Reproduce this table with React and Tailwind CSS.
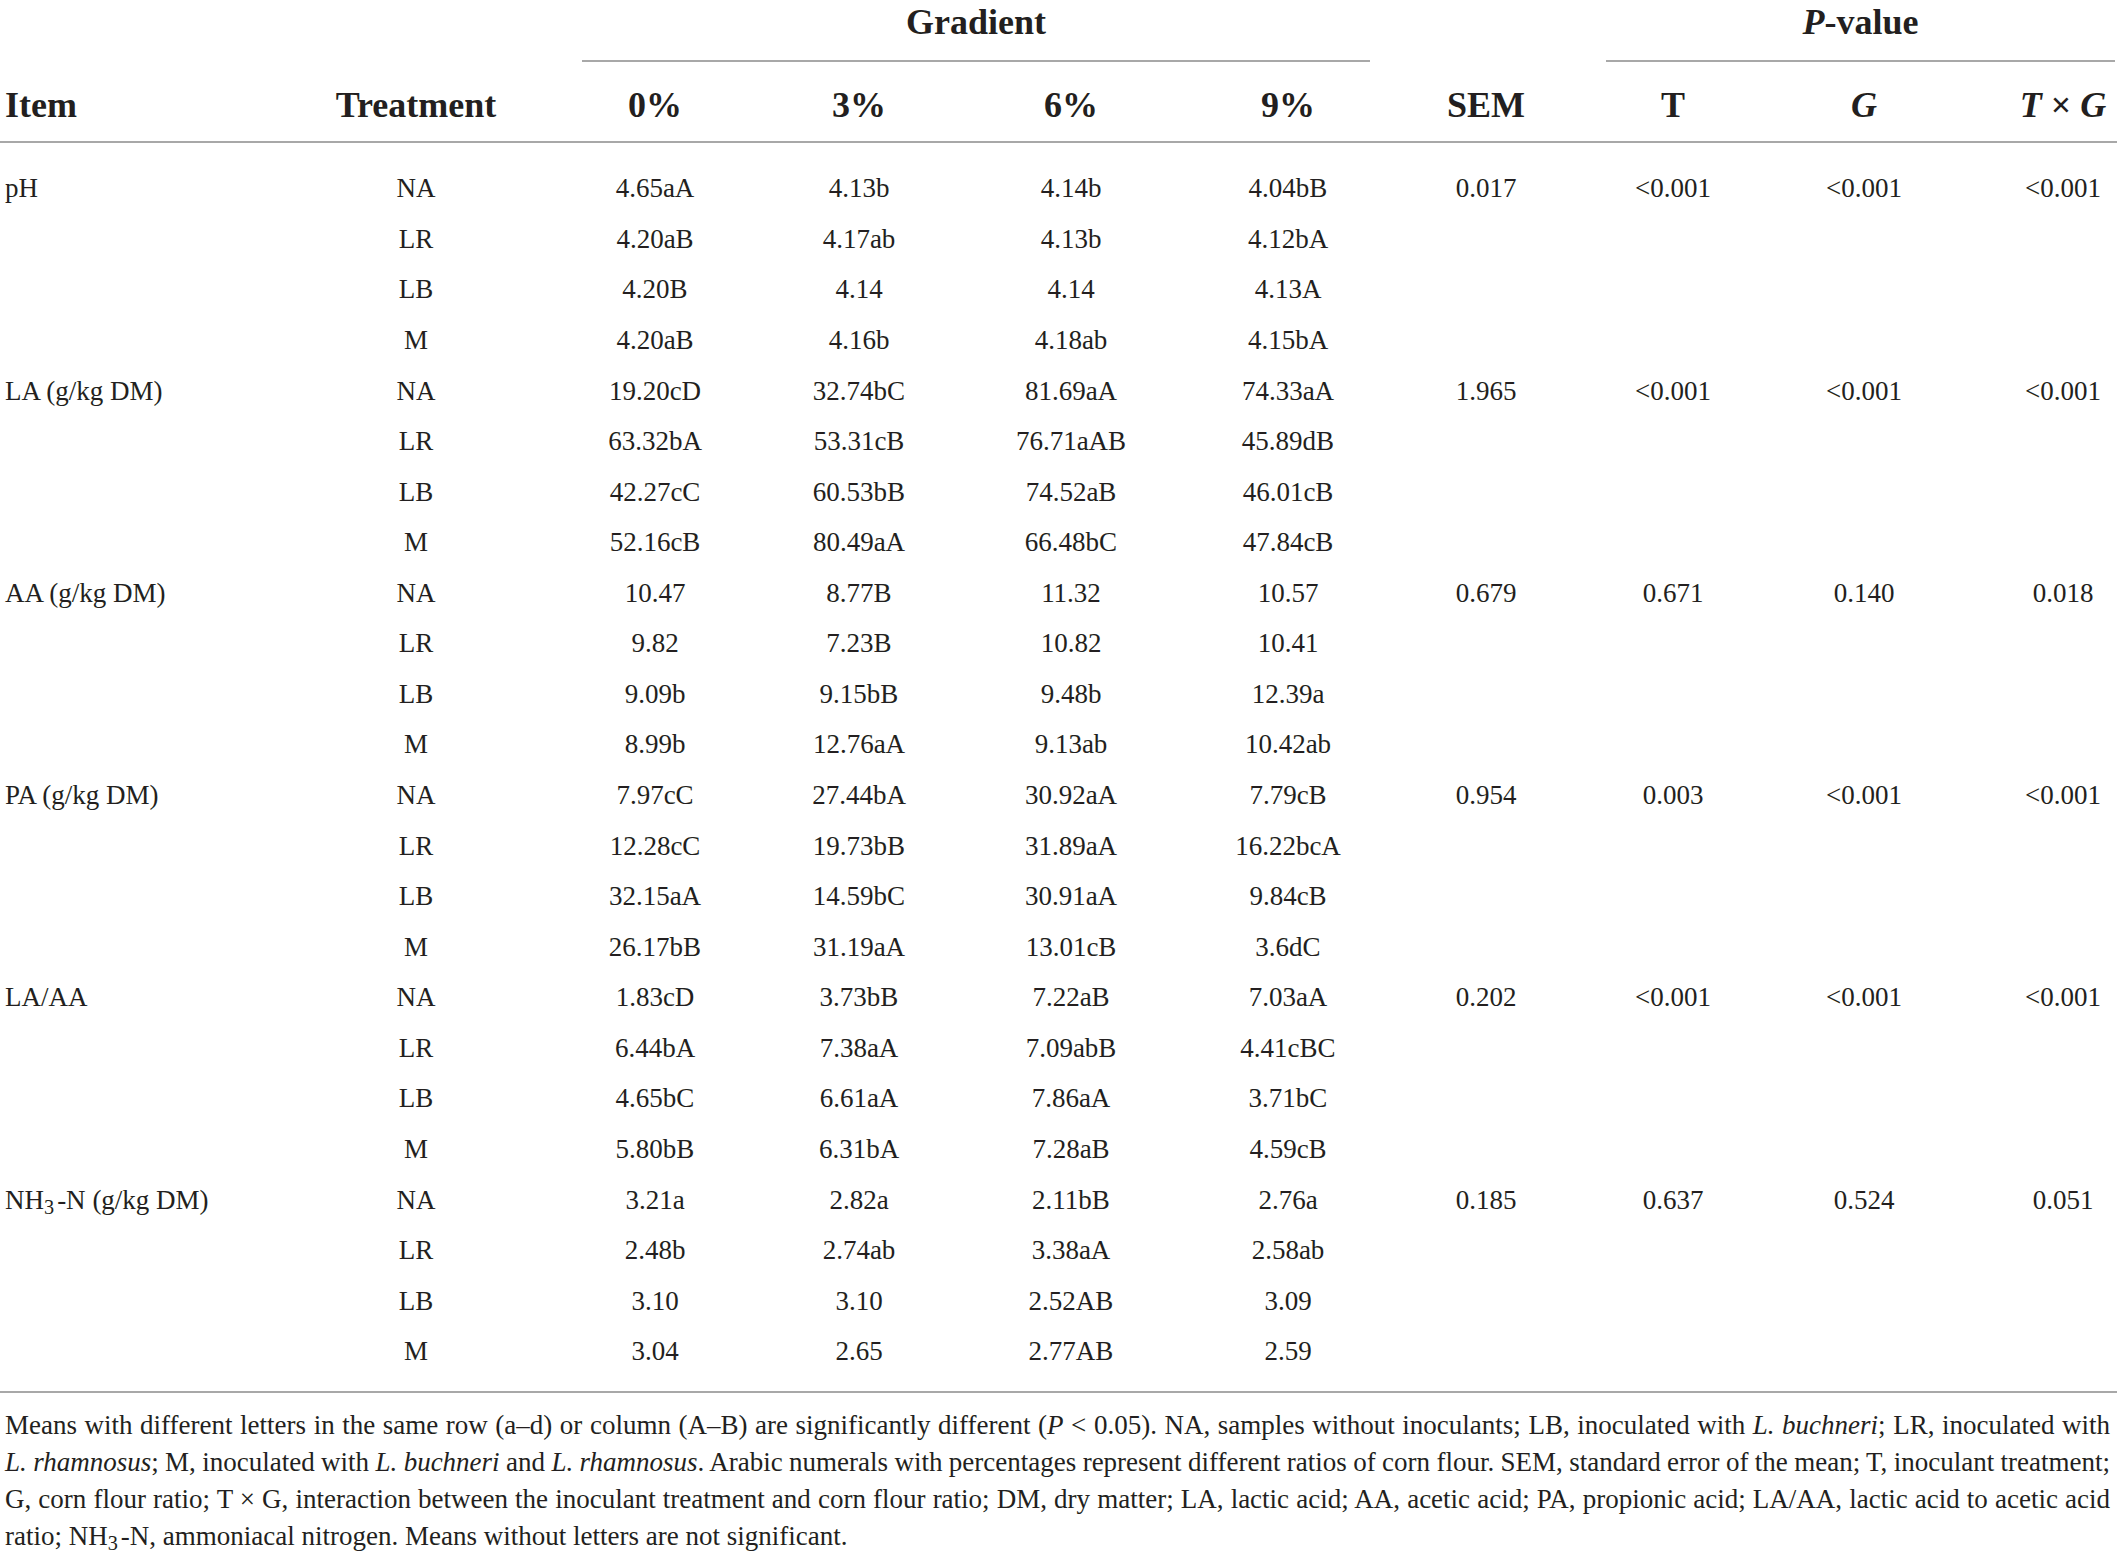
import React from "react";

const cols = "grid grid-cols-[300px_232px_246px_162px_262px_172px_224px_150px_232px_137px]";

const N3 = () => (
  <>
    NH<sub className="mr-[3px]">3</sub>-N
  </>
);

const groups = [
  {
    item: "pH",
    stats: ["0.017", "<0.001", "<0.001", "<0.001"],
    rows: [
      ["NA", "4.65aA", "4.13b", "4.14b", "4.04bB"],
      ["LR", "4.20aB", "4.17ab", "4.13b", "4.12bA"],
      ["LB", "4.20B", "4.14", "4.14", "4.13A"],
      ["M", "4.20aB", "4.16b", "4.18ab", "4.15bA"],
    ],
  },
  {
    item: "LA (g/kg DM)",
    stats: ["1.965", "<0.001", "<0.001", "<0.001"],
    rows: [
      ["NA", "19.20cD", "32.74bC", "81.69aA", "74.33aA"],
      ["LR", "63.32bA", "53.31cB", "76.71aAB", "45.89dB"],
      ["LB", "42.27cC", "60.53bB", "74.52aB", "46.01cB"],
      ["M", "52.16cB", "80.49aA", "66.48bC", "47.84cB"],
    ],
  },
  {
    item: "AA (g/kg DM)",
    stats: ["0.679", "0.671", "0.140", "0.018"],
    rows: [
      ["NA", "10.47", "8.77B", "11.32", "10.57"],
      ["LR", "9.82", "7.23B", "10.82", "10.41"],
      ["LB", "9.09b", "9.15bB", "9.48b", "12.39a"],
      ["M", "8.99b", "12.76aA", "9.13ab", "10.42ab"],
    ],
  },
  {
    item: "PA (g/kg DM)",
    stats: ["0.954", "0.003", "<0.001", "<0.001"],
    rows: [
      ["NA", "7.97cC", "27.44bA", "30.92aA", "7.79cB"],
      ["LR", "12.28cC", "19.73bB", "31.89aA", "16.22bcA"],
      ["LB", "32.15aA", "14.59bC", "30.91aA", "9.84cB"],
      ["M", "26.17bB", "31.19aA", "13.01cB", "3.6dC"],
    ],
  },
  {
    item: "LA/AA",
    stats: ["0.202", "<0.001", "<0.001", "<0.001"],
    rows: [
      ["NA", "1.83cD", "3.73bB", "7.22aB", "7.03aA"],
      ["LR", "6.44bA", "7.38aA", "7.09abB", "4.41cBC"],
      ["LB", "4.65bC", "6.61aA", "7.86aA", "3.71bC"],
      ["M", "5.80bB", "6.31bA", "7.28aB", "4.59cB"],
    ],
  },
  {
    item: "NH3",
    stats: ["0.185", "0.637", "0.524", "0.051"],
    rows: [
      ["NA", "3.21a", "2.82a", "2.11bB", "2.76a"],
      ["LR", "2.48b", "2.74ab", "3.38aA", "2.58ab"],
      ["LB", "3.10", "3.10", "2.52AB", "3.09"],
      ["M", "3.04", "2.65", "2.77AB", "2.59"],
    ],
  },
];

function Row({ item, cells, stats }) {
  return (
    <div className={`${cols} h-[50.57px] items-center`}>
      <div className="pl-[5px] whitespace-nowrap">
        {item === "NH3" ? (
          <>
            <N3 /> (g/kg DM)
          </>
        ) : (
          item
        )}
      </div>
      {cells.map((c, i) => (
        <div key={i} className="text-center whitespace-nowrap">
          {c}
        </div>
      ))}
      <div className="text-center">{stats ? stats[0] : ""}</div>
      <div className="text-center">{stats ? stats[1] : ""}</div>
      <div className="text-center">{stats ? stats[2] : ""}</div>
      <div className="pl-[29px] text-center">{stats ? stats[3] : ""}</div>
    </div>
  );
}

const lineCls = "[text-align:justify] [text-align-last:justify] [word-spacing:-3px]";

export default function App() {
  return (
    <div
      className="min-h-[1557px] w-[2117px] bg-white text-[#231f20] text-[27px] overflow-hidden"
      style={{ fontFamily: '"Liberation Serif", "Times New Roman", serif' }}
    >
      {/* Spanning header */}
      <div className={`${cols} font-bold text-[36px]`}>
        <div className="col-start-3 col-span-4 ml-[50px] mr-[4px] border-b-2 border-[#a8a8a8] pb-[16px] leading-[44px] text-center">
          Gradient
        </div>
        <div className="col-start-8 col-span-3 ml-[8px] mr-[2px] border-b-2 border-[#a8a8a8] pb-[16px] leading-[44px] text-center">
          <i>P</i>-value
        </div>
      </div>

      {/* Column headers */}
      <div className={`${cols} h-[81px] items-center pt-[6px] border-b-2 border-[#a8a8a8] font-bold text-[36px] leading-[44px]`}>
        <div className="pl-[5px]">Item</div>
        <div className="text-center">Treatment</div>
        <div className="text-center">0%</div>
        <div className="text-center">3%</div>
        <div className="text-center">6%</div>
        <div className="text-center">9%</div>
        <div className="text-center">SEM</div>
        <div className="text-center">T</div>
        <div className="text-center">
          <i>G</i>
        </div>
        <div className="pl-[29px] text-center whitespace-nowrap">
          <i>T</i> × <i>G</i>
        </div>
      </div>

      {/* Body */}
      <div className="pt-[20px] pb-[14px] border-b-2 border-[#a8a8a8] leading-[30px]">
        {groups.map((g) =>
          g.rows.map((r, i) => (
            <Row
              key={g.item + r[0]}
              item={i === 0 ? g.item : ""}
              cells={r}
              stats={i === 0 ? g.stats : null}
            />
          ))
        )}
      </div>

      {/* Footnote */}
      <div className="pt-[14px] pl-[5px] pr-[7px] text-[27px] leading-[37px]">
        <div className={lineCls}>
          Means with different letters in the same row (a–d) or column (A–B) are significantly different (<i>P</i> &lt; 0.05). NA, samples without inoculants; LB, inoculated with <i>L. buchneri</i>; LR, inoculated with
        </div>
        <div className={lineCls}>
          <i>L. rhamnosus</i>; M, inoculated with <i>L. buchneri</i> and <i>L. rhamnosus</i>. Arabic numerals with percentages represent different ratios of corn flour. SEM, standard error of the mean; T, inoculant treatment;
        </div>
        <div className={lineCls}>
          G, corn flour ratio; T × G, interaction between the inoculant treatment and corn flour ratio; DM, dry matter; LA, lactic acid; AA, acetic acid; PA, propionic acid; LA/AA, lactic acid to acetic acid
        </div>
        <div className="whitespace-nowrap">
          ratio; <N3 />, ammoniacal nitrogen. Means without letters are not significant.
        </div>
      </div>
    </div>
  );
}
